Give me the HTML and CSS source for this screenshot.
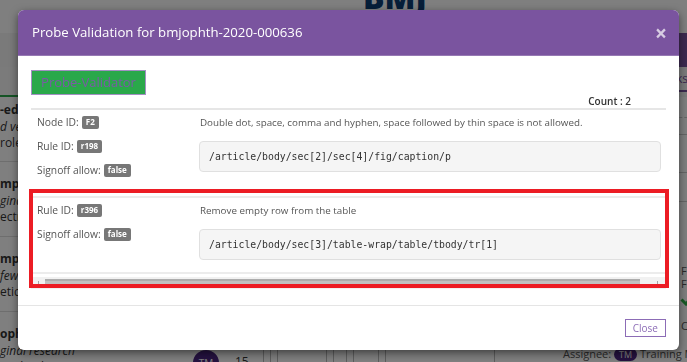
FILE: index.html
```html
<!DOCTYPE html>
<html lang="en">
<head>
<meta charset="utf-8">
<title>Probe Validation</title>
<link rel="stylesheet" href="styles.css">
</head>
<body>
<div class="app">
  <header class="brand"><span class="logo">BMJ</span></header>
  <nav class="nav"><div class="nav-accent"></div></nav>
  <div class="tabs">
    <div class="tab tab-active"></div>
    <div class="tab tab-right"><span>Tasks</span></div>
  </div>
  <div class="content">
    <div class="list">
      <div class="item item-first">
        <div class="item-text">
          <p class="l1">-editing</p>
          <p class="l2">d version</p>
          <p class="l3">role assigned</p>
        </div>
      </div>
      <div class="item">
        <div class="item-text">
          <p class="l1">mphasis</p>
          <p class="l2">ginal</p>
          <p class="l3">ectrum</p>
        </div>
      </div>
      <div class="item">
        <div class="item-text">
          <p class="l1">mphasis</p>
          <p class="l2">few</p>
          <p class="l3">etic</p>
        </div>
      </div>
      <div class="item">
        <div class="item-text">
          <p class="l1">ophthalmology</p>
          <p class="l2">ginal research</p>
          <p class="l3">itochio hat</p>
        </div>
        <div class="avatar">TM</div>
        <div class="num">15</div>
        <div class="cells">
          <span class="cell c1"></span><span class="cell c2"></span><span class="cell c3"></span><span class="cell c4"></span><span class="cell c5"></span>
        </div>
      </div>
    </div>
    <div class="side">
      <div class="meta m1"></div>
      <div class="meta m2"></div>
      <div class="meta m3"></div>
      <div class="meta m4"></div>
      <div class="files">
        <p>Files</p>
        <p>Font</p>
        <svg class="check" width="16" height="14" viewBox="0 0 16 14"><path d="M1.5 7.5 L6 12 L14.5 2" fill="none" stroke="#33b34a" stroke-width="3"/></svg>
        <p class="done">Completed</p>
      </div>
      <div class="assignee">Assignee: <span class="pill">TM</span> Training Manager</div>
    </div>
  </div>
</div>

<div class="backdrop"></div>

<div class="modal">
  <div class="modal-header">
    <h4 class="modal-title">Probe Validation for bmjophth-2020-000636</h4>
    <span class="modal-close">×</span>
  </div>
  <div class="modal-body">
    <button class="btn-probe" type="button">Probe-Validator</button>
    <div class="count-row">Count : 2</div>
    <div class="results">
      <div class="result">
        <div class="result-meta">
          <div class="meta-line">Node ID: <span class="badge">F2</span></div>
          <div class="meta-line">Rule ID: <span class="badge">r198</span></div>
          <div class="meta-line">Signoff allow: <span class="badge">false</span></div>
        </div>
        <div class="result-info">
          <div class="desc">Double dot, space, comma and hyphen, space followed by thin space is not allowed.</div>
          <pre class="xpath">/article/body/sec[2]/sec[4]/fig/caption/p</pre>
        </div>
      </div>
      <div class="result">
        <div class="result-meta">
          <div class="meta-line">Rule ID: <span class="badge">r396</span></div>
          <div class="meta-line">Signoff allow: <span class="badge">false</span></div>
        </div>
        <div class="result-info">
          <div class="desc">Remove empty row from the table</div>
          <pre class="xpath">/article/body/sec[3]/table-wrap/table/tbody/tr[1]</pre>
        </div>
      </div>
    </div>
    <div class="hscroll">
      <span class="arrow-l"></span>
      <span class="thumb"></span>
      <span class="arrow-r"></span>
    </div>
  </div>
  <div class="modal-footer">
    <button class="btn-close" type="button">Close</button>
  </div>
  <div class="highlight"></div>
</div>
</body>
</html>
```
FILE: styles.css
```css
* { box-sizing: border-box; }
html, body { margin: 0; padding: 0; }
body {
  width: 687px;
  height: 362px;
  overflow: hidden;
  position: relative;
  font-family: "Open Sans", "Liberation Sans", sans-serif;
  color: #333;
}
p { margin: 0; }

/* ---------- page underneath ---------- */
.app {
  width: 687px;
  height: 362px;
  background: #fff;
  overflow: hidden;
}
.brand {
  height: 33px;
  padding-left: 363px;
  overflow: hidden;
  display: flex;
}
.logo {
  font-size: 32px;
  font-weight: 800;
  line-height: 1;
  color: #0c3d72;
  margin-top: -19px;
}
.nav {
  height: 34px;
  display: flex;
  justify-content: flex-end;
  background: #f4f4f4;
}
.nav-accent { width: 140px; background: #7b54a1; }
.tabs {
  height: 30px;
  display: flex;
  background: #f6f6f6;
}
.tab-active {
  width: 300px;
  border-bottom: 2px solid #2aa84a;
}
.tab-right {
  margin-left: auto;
  width: 140px;
  height: 25px;
  border-bottom: 2px solid #7b54a1;
  display: flex;
  align-items: center;
  justify-content: flex-end;
  font-size: 12px;
  color: #7b54a1;
}
.tab-right span { margin-right: -1px; }

.content {
  display: grid;
  grid-template-columns: 560px 1fr;
}
.list { display: flex; flex-direction: column; }
.item {
  height: 75px;
  border-bottom: 1px solid #ddd;
  padding-top: 14px;
  display: flex;
  font-size: 12px;
  line-height: 16.5px;
}
.item-first { height: 65px; padding-top: 5px; }
.item-text { width: 193px; }
.l1 { font-weight: 700; }
.l2 { font-style: italic; }
.avatar {
  width: 26px;
  height: 26px;
  margin-top: 24px;
  border-radius: 50%;
  background: #4b2480;
  color: #fff;
  font-size: 10px;
  display: flex;
  align-items: center;
  justify-content: center;
}
.num { margin: 28px 0 0 16px; font-size: 12px; color: #333; }
.cells { display: flex; margin: 24px 0 0 14px; gap: 6px; height: 40px; }
.cell { border-left: 1px solid #bbb; border-right: 1px solid #bbb; height: 40px; }
.c1 { width: 8px; }
.c2 { width: 50px; }
.c3 { width: 14px; }
.c4 { width: 26px; }
.c5 { width: 110px; }

.side { display: flex; flex-direction: column; font-size: 11px; }
.meta { border-bottom: 1px solid #ccc; }
.m1 { height: 21px; border-bottom-style: dashed; }
.m2 { height: 17px; }
.m3 { height: 38px; }
.m4 { height: 29px; }
.files { padding: 62px 0 0 121px; line-height: 13px; color: #555; }
.check { display: block; margin: 2px 0 0 -1px; }
.done { margin-top: 13px; }
.assignee { margin-top: 14px; padding-left: 3px; font-size: 11px; color: #555; white-space: nowrap; }
.pill {
  display: inline-block;
  background: #4b2480;
  color: #fff;
  border-radius: 8px;
  padding: 0 5px;
  font-size: 9px;
  line-height: 13px;
}

/* ---------- overlay ---------- */
.backdrop {
  position: fixed;
  inset: 0;
  background: rgba(0, 0, 0, 0.5);
}

/* ---------- modal ---------- */
.modal {
  position: absolute;
  left: 18px;
  top: 10px;
  width: 661px;
  background: #fff;
  border-radius: 6px;
  overflow: hidden;
  box-shadow: 0 3px 9px rgba(0, 0, 0, 0.5);
}
.modal-header {
  height: 46px;
  background: #7a549f;
  display: flex;
  align-items: center;
  justify-content: space-between;
  padding: 0 12px 0 14px;
  border-bottom: 1px solid #9679b3;
}
.modal-title {
  margin: 0;
  font-size: 13.2px;
  font-weight: 400;
  color: #fff;
  line-height: 1;
}
.modal-close {
  font-size: 21px;
  font-weight: 700;
  line-height: 1;
  color: rgba(255, 255, 255, 0.7);
  margin-top: 1px;
}
.modal-body {
  padding: 14px 13px 16px;
}
.btn-probe {
  display: block;
  width: 115px;
  height: 25px;
  padding: 0;
  background: #2aa84a;
  border: 1px solid #a28fc2;
  color: #7b5aa6;
  font-family: "Open Sans", sans-serif;
  font-size: 13px;
  line-height: 23px;
  text-align: center;
}
.count-row {
  height: 13px;
  line-height: 13px;
  text-align: right;
  padding-right: 35px;
  font-size: 10px;
  font-weight: 600;
  color: #333;
}
.results {
  border-top: 2px solid #e6e6e6;
}
.result {
  display: flex;
  padding-bottom: 12px;
  border-bottom: 2px solid #ececec;
}
.result-meta {
  width: 168px;
  padding-left: 6px;
  padding-bottom: 2px;
}
.meta-line {
  height: 24px;
  display: flex;
  align-items: center;
  gap: 3px;
  font-size: 10.3px;
  color: #555;
}
.badge {
  display: inline-block;
  background: #777;
  color: #fff;
  font-size: 8px;
  font-weight: 700;
  line-height: 8px;
  padding: 2.5px 4px;
  border-radius: 2px;
}
.result-info {
  flex: 1;
  padding-right: 5px;
}
.desc {
  height: 24px;
  display: flex;
  align-items: center;
  font-size: 9.8px;
  color: #555;
  padding-left: 1px;
}
.xpath {
  margin: 7px 0 0;
  height: 31px;
  padding: 0 9px;
  display: flex;
  align-items: center;
  background: #f5f5f5;
  border: 1px solid #e0e0e0;
  border-radius: 4px;
  font-family: "DejaVu Sans Mono", "Liberation Mono", monospace;
  font-size: 9.8px;
  color: #333;
}
.hscroll {
  margin-top: 3px;
  height: 12px;
  background: #f1f1f1;
  display: flex;
  align-items: center;
}
.arrow-l {
  width: 14px;
  height: 100%;
  display: flex;
  justify-content: center;
  align-items: center;
}
.arrow-l::before {
  content: "";
  width: 1px;
  height: 5px;
  background: #a3a3a3;
}
.thumb {
  width: 595px;
  height: 9px;
  background: #c1c1c1;
  border-top: 2px solid #adadad;
}
.arrow-r {
  flex: 1;
  display: flex;
  justify-content: flex-end;
  padding-right: 8px;
}
.arrow-r::before {
  content: "";
  width: 1px;
  height: 5px;
  background: #a3a3a3;
}
.modal-footer {
  border-top: 1px solid #e5e5e5;
  padding: 13px 13px 13px;
  display: flex;
  justify-content: flex-end;
}
.btn-close {
  height: 18px;
  padding: 0 7px;
  background: #fff;
  border: 1px solid #8c6cb6;
  color: #8c6cb6;
  font-family: "Open Sans", sans-serif;
  font-size: 10px;
  line-height: 16px;
}
.highlight {
  position: absolute;
  left: 11px;
  top: 179px;
  width: 640px;
  height: 99px;
  border: 4px solid #ec1c24;
}
```
